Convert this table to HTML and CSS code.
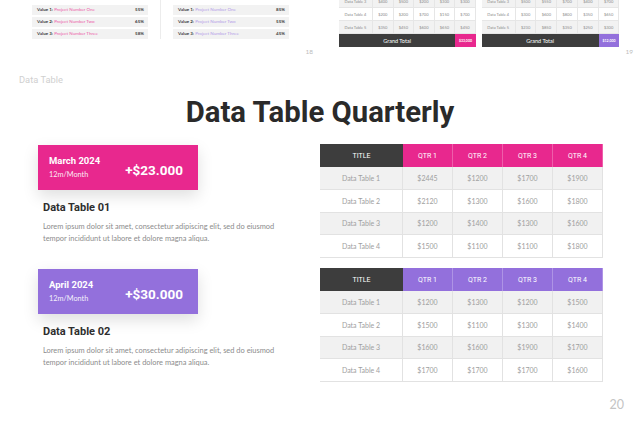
FILE: index.html
```html
<!DOCTYPE html>
<html lang="en">
<head>
<meta charset="utf-8">
<title>Data Table Quarterly</title>
<link rel="stylesheet" href="styles.css">
</head>
<body>
<div class="thumbs">
  <section class="thumb thumb-values">
    <div class="vgroup">
      <div class="vrow"><span><b>Value 1:</b> <span class="pk">Project Number One</span></span><b>55%</b></div>
      <div class="vrow"><span><b>Value 2:</b> <span class="pk">Project Number Two</span></span><b>65%</b></div>
      <div class="vrow"><span><b>Value 3:</b> <span class="pk">Project Number Three</span></span><b>58%</b></div>
    </div>
    <div class="vdivider"></div>
    <div class="vgroup">
      <div class="vrow"><span><b>Value 1:</b> <span class="pu">Project Number One</span></span><b>85%</b></div>
      <div class="vrow"><span><b>Value 2:</b> <span class="pu">Project Number Two</span></span><b>55%</b></div>
      <div class="vrow"><span><b>Value 3:</b> <span class="pu">Project Number Three</span></span><b>45%</b></div>
    </div>
    <span class="pnum-sm">18</span>
  </section>
  <section class="thumb thumb-tables">
    <div class="mini">
      <div class="mrow alt"><span>Data Table 3</span><span>$400</span><span>$500</span><span>$200</span><span>$300</span><span>$300</span></div>
      <div class="mrow"><span>Data Table 4</span><span>$200</span><span>$200</span><span>$700</span><span>$150</span><span>$700</span></div>
      <div class="mrow alt"><span>Data Table 5</span><span>$350</span><span>$450</span><span>$600</span><span>$650</span><span>$450</span></div>
      <div class="mtotal"><span class="mt-label">Grand Total</span><span class="mt-val bg-pink">$33,000</span></div>
    </div>
    <div class="mini mini-wide">
      <div class="mrow alt"><span>Data Table 3</span><span>$500</span><span>$550</span><span>$700</span><span>$400</span><span>$700</span></div>
      <div class="mrow"><span>Data Table 4</span><span>$300</span><span>$600</span><span>$800</span><span>$350</span><span>$650</span></div>
      <div class="mrow alt"><span>Data Table 5</span><span>$230</span><span>$850</span><span>$350</span><span>$250</span><span>$300</span></div>
      <div class="mtotal"><span class="mt-label">Grand Total</span><span class="mt-val bg-purple">$12,000</span></div>
    </div>
    <span class="pnum-sm">19</span>
  </section>
</div>

<main class="slide">
  <p class="label">Data Table</p>
  <h1 class="title">Data Table Quarterly</h1>
  <div class="content">
    <div class="item">
      <div class="card bg-pink">
        <div class="card-info">
          <span class="card-month">March 2024</span>
          <span class="card-sub">12m/Month</span>
        </div>
        <span class="card-amount">+$23.000</span>
      </div>
      <h2 class="item-title">Data Table 01</h2>
      <p class="desc">Lorem ipsum dolor sit amet, consectetur adipiscing elit, sed do eiusmod<br>tempor incididunt ut labore et dolore magna aliqua.</p>
    </div>
    <div class="qtable">
      <div class="qrow qhead head-pink"><span class="qtitle">TITLE</span><span>QTR 1</span><span>QTR 2</span><span>QTR 3</span><span>QTR 4</span></div>
      <div class="qrow"><span>Data Table 1</span><span>$2445</span><span>$1200</span><span>$1700</span><span>$1900</span></div>
      <div class="qrow"><span>Data Table 2</span><span>$2120</span><span>$1300</span><span>$1600</span><span>$1800</span></div>
      <div class="qrow"><span>Data Table 3</span><span>$1200</span><span>$1400</span><span>$1300</span><span>$1600</span></div>
      <div class="qrow"><span>Data Table 4</span><span>$1500</span><span>$1100</span><span>$1100</span><span>$1800</span></div>
    </div>
    <div class="item">
      <div class="card bg-purple">
        <div class="card-info">
          <span class="card-month">April 2024</span>
          <span class="card-sub">12m/Month</span>
        </div>
        <span class="card-amount">+$30.000</span>
      </div>
      <h2 class="item-title">Data Table 02</h2>
      <p class="desc">Lorem ipsum dolor sit amet, consectetur adipiscing elit, sed do eiusmod<br>tempor incididunt ut labore et dolore magna aliqua.</p>
    </div>
    <div class="qtable">
      <div class="qrow qhead head-purple"><span class="qtitle">TITLE</span><span>QTR 1</span><span>QTR 2</span><span>QTR 3</span><span>QTR 4</span></div>
      <div class="qrow"><span>Data Table 1</span><span>$1200</span><span>$1300</span><span>$1200</span><span>$1500</span></div>
      <div class="qrow"><span>Data Table 2</span><span>$1500</span><span>$1100</span><span>$1300</span><span>$1400</span></div>
      <div class="qrow"><span>Data Table 3</span><span>$1600</span><span>$1600</span><span>$1900</span><span>$1700</span></div>
      <div class="qrow"><span>Data Table 4</span><span>$1700</span><span>$1700</span><span>$1700</span><span>$1600</span></div>
    </div>
  </div>
  <span class="pnum">20</span>
</main>
</body>
</html>
```
FILE: styles.css
```css
* { box-sizing: border-box; }

body {
  margin: 0;
  width: 640px;
  height: 422px;
  overflow: hidden;
  background: #ffffff;
  font-family: Lato, "Open Sans", sans-serif;
}

.bg-pink { background: #e8288e; }
.bg-purple { background: #9370dc; }

/* ---------- previous slides strip ---------- */
.thumbs {
  display: grid;
  grid-template-columns: 320px 320px;
  height: 62px;
}

.thumb {
  display: flex;
  align-items: flex-start;
}

.thumb-values {
  padding: 5px 0 0 32px;
}

.vgroup {
  width: 116px;
  display: flex;
  flex-direction: column;
  gap: 2px;
}

.vrow {
  height: 10px;
  background: #f2f2f2;
  display: flex;
  align-items: center;
  justify-content: space-between;
  padding: 0 4px 0 5px;
  font-size: 4.5px;
  line-height: 1;
  color: #3a3a3a;
}

.pk { color: #ec5aa8; }
.pu { color: #b29ce8; }

.vdivider {
  width: 1px;
  height: 39px;
  margin: -5px 12px 0;
  background: #ececec;
}

.pnum-sm {
  align-self: flex-end;
  margin-left: auto;
  margin-right: 7px;
  margin-bottom: 6px;
  font-size: 6.5px;
  line-height: 8px;
  color: #bdbdbd;
}

.thumb-tables {
  padding-left: 19px;
  gap: 6px;
}

.mini {
  width: 138px;
  height: 47px;
  display: flex;
  flex-direction: column;
  justify-content: flex-end;
  overflow: hidden;
}

.mini-wide { width: 139px; }

.mrow {
  flex: none;
  height: 13px;
  display: grid;
  grid-template-columns: 34px repeat(5, 1fr);
  font-size: 4px;
  color: #8a8a8a;
  border-bottom: 1px solid #e6e6e6;
}

.mrow.alt { background: #f2f2f2; }

.mrow span {
  display: flex;
  align-items: center;
  justify-content: center;
  border-right: 1px solid #e6e6e6;
}

.mtotal {
  flex: none;
  height: 13px;
  display: grid;
  grid-template-columns: 34px repeat(5, 1fr);
  color: #ffffff;
}

.mt-label {
  grid-column: 1 / 6;
  background: #3d3d3d;
  display: flex;
  align-items: center;
  justify-content: center;
  font-size: 5.5px;
}

.mt-val {
  display: flex;
  align-items: center;
  justify-content: center;
  font-size: 3.5px;
  font-weight: 700;
}

/* ---------- main slide ---------- */
.slide {
  height: 360px;
  display: flex;
  flex-direction: column;
  padding-top: 12px;
}

.label {
  margin: 0 0 0 19px;
  font-family: Roboto, sans-serif;
  font-size: 9.3px;
  line-height: 12px;
  color: #d0d0d0;
}

.title {
  margin: 9px 0 0;
  text-align: center;
  font-family: Roboto, sans-serif;
  font-weight: 700;
  font-size: 29.3px;
  line-height: 34px;
  color: #2a2a2a;
}

.content {
  margin-top: 15px;
  padding-left: 38px;
  display: grid;
  grid-template-columns: 160px 283px;
  column-gap: 122px;
  row-gap: 10px;
  align-items: start;
}

.card {
  margin-top: 1px;
  height: 45px;
  display: flex;
  align-items: center;
  justify-content: space-between;
  padding: 0 15px 0 11px;
  color: #ffffff;
  box-shadow: 0 6px 16px rgba(0, 0, 0, 0.13);
}

.card-info {
  display: flex;
  flex-direction: column;
  gap: 3px;
  margin-top: -1px;
}

.card-month {
  font-family: Roboto, sans-serif;
  font-weight: 700;
  font-size: 9.5px;
  line-height: 12px;
}

.card-sub {
  font-size: 7.3px;
  line-height: 10px;
  opacity: 0.9;
}

.card-amount {
  padding-top: 5px;
  font-family: Roboto, sans-serif;
  font-weight: 700;
  font-size: 13.5px;
  line-height: 16px;
}

.item-title {
  margin: 11px 0 0;
  padding-left: 5px;
  font-family: Roboto, sans-serif;
  font-weight: 700;
  font-size: 11px;
  line-height: 14px;
  color: #2e2e2e;
}

.desc {
  margin: 6px 0 0;
  padding-left: 5px;
  white-space: nowrap;
  font-size: 7.45px;
  line-height: 12px;
  color: #8c8c8c;
}

.qtable {
  display: flex;
  flex-direction: column;
}

.qrow {
  height: 22.75px;
  display: grid;
  grid-template-columns: 83px repeat(4, 1fr);
  border-bottom: 1px solid #e2e2e2;
  font-size: 7px;
  color: #a0a0a0;
}

.qrow:nth-child(even) { background: #f1f1f1; }

.qrow span {
  display: flex;
  align-items: center;
  justify-content: center;
  border-right: 1px solid #e2e2e2;
}

.qhead {
  height: 23px;
  border-bottom: none;
  font-family: Roboto, sans-serif;
  color: #ffffff;
}

.qhead span { border-right: 1px solid rgba(255, 255, 255, 0.25); }
.head-pink { background: #e8288e; }
.head-purple { background: #9370dc; }
.qhead .qtitle { background: #3d3d3d; border-right: none; }

.pnum {
  margin-top: auto;
  align-self: flex-end;
  margin-right: 16px;
  margin-bottom: 10px;
  font-size: 12.5px;
  line-height: 15px;
  color: #c4c4c4;
}
```
